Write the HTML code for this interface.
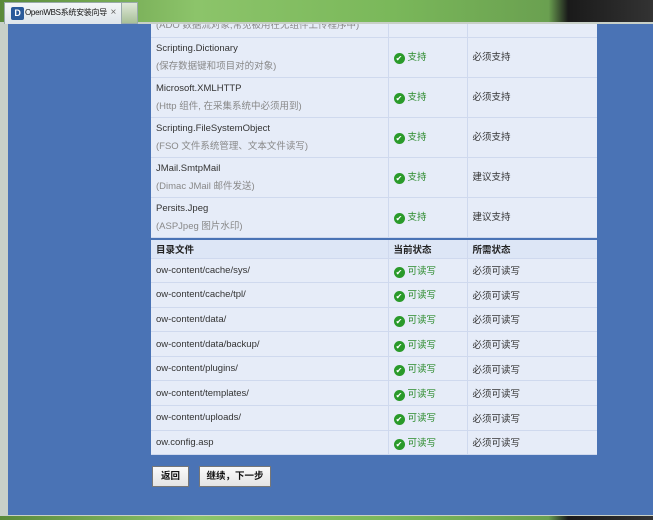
<!DOCTYPE html>
<html><head><meta charset="utf-8"><style>
*{margin:0;padding:0;box-sizing:border-box}
body{width:653px;height:520px;overflow:hidden;position:relative;font-family:"Liberation Sans","Noto Sans CJK SC",sans-serif;font-size:9.5px;color:#333;background:linear-gradient(90deg,#5a8a3a,#8cc46a 30%,#7ab85a 60%,#6aa050 84%,#1a1a1a 87%,#333 100%)}
.frame{position:absolute;left:0;top:22px;width:653px;height:494px;background:#c8d0c8}
.blue{position:absolute;left:8px;top:24px;width:645px;height:491px;background:#4a73b5}
.tab{position:absolute;left:4px;top:2px;width:118px;height:22px;background:linear-gradient(#f4f6f8,#dfe5ea);border:1px solid #9aa;border-bottom:none;font-size:8px;letter-spacing:-0.3px;color:#111;line-height:20px;padding-left:20px;white-space:nowrap;overflow:hidden}
.tab .ic{position:absolute;left:6px;top:4px;width:13px;height:13px;background:#2a5a9a;border-radius:2px;color:#fff;font-size:9px;line-height:13px;text-align:center;font-weight:bold}
.tab .x{position:absolute;right:5px;top:0;color:#666;font-size:10px}
.tab2{position:absolute;left:122px;top:2px;width:16px;height:22px;background:linear-gradient(#dfe8d8,#a8c098);border:1px solid #9aa;border-left:none}
table{position:absolute;left:151px;border-collapse:collapse;background:#e6ecf8;width:446px}
td{border-bottom:1px solid #cfd9ee;border-right:1px solid #cfd9ee;padding-left:5px;vertical-align:middle}
td:last-child{border-right:none}
.c1{width:237px}.c2{width:79px}
.t1 td{height:40px;line-height:18px}
.t1 .g{color:#888}
.ok{color:#2a8a2a}
.ok:before{content:"✔";display:inline-block;width:11px;height:11px;border-radius:50%;background:#2a9a2a;color:#fff;font-size:8px;line-height:11px;text-align:center;margin-right:3px;vertical-align:-1px}
.t2 td{height:24.6px}
.t2 th{height:18px;text-align:left;padding-left:5px;font-weight:bold;color:#222;background:#dde6f6;border-right:1px solid #cfd9ee;border-bottom:1px solid #cfd9ee}
.btn{position:absolute;top:466px;height:21px;background:linear-gradient(#fafafa,#e4e4e4);border:1px solid #777;font-weight:bold;font-size:9.5px;text-align:center;line-height:19px;color:#111}
.cut{height:13px;overflow:hidden}
.cut span{display:block;margin-top:-7px;line-height:18px}
</style></head><body>
<div class="frame"></div>
<div class="tab"><span class="ic">D</span>OpenWBS系统安装向导<span class="x">×</span></div>
<div class="tab2"></div>
<div class="blue"></div>
<table class="t1" style="top:24px">
<tr><td class="c1" style="height:13px;line-height:10px"><div class="cut"><span class="g">(ADO 数据流对象,常见被用在无组件上传程序中)</span></div></td><td class="c2" style="height:13px"></td><td style="height:13px"></td></tr>
<tr><td class="c1">Scripting.Dictionary<br><span class="g">(保存数据键和项目对的对象)</span></td><td class="c2"><span class="ok">支持</span></td><td>必须支持</td></tr>
<tr><td class="c1">Microsoft.XMLHTTP<br><span class="g">(Http 组件, 在采集系统中必须用到)</span></td><td class="c2"><span class="ok">支持</span></td><td>必须支持</td></tr>
<tr><td class="c1">Scripting.FileSystemObject<br><span class="g">(FSO 文件系统管理、文本文件读写)</span></td><td class="c2"><span class="ok">支持</span></td><td>必须支持</td></tr>
<tr><td class="c1">JMail.SmtpMail<br><span class="g">(Dimac JMail 邮件发送)</span></td><td class="c2"><span class="ok">支持</span></td><td>建议支持</td></tr>
<tr><td class="c1" style="height:39px">Persits.Jpeg<br><span class="g">(ASPJpeg 图片水印)</span></td><td class="c2"><span class="ok">支持</span></td><td>建议支持</td></tr>
</table>
<table class="t2" style="top:240px">
<tr><th class="c1">目录文件</th><th class="c2">当前状态</th><th style="border-right:none">所需状态</th></tr>
<tr><td>ow-content/cache/sys/</td><td><span class="ok">可读写</span></td><td>必须可读写</td></tr>
<tr><td>ow-content/cache/tpl/</td><td><span class="ok">可读写</span></td><td>必须可读写</td></tr>
<tr><td>ow-content/data/</td><td><span class="ok">可读写</span></td><td>必须可读写</td></tr>
<tr><td>ow-content/data/backup/</td><td><span class="ok">可读写</span></td><td>必须可读写</td></tr>
<tr><td>ow-content/plugins/</td><td><span class="ok">可读写</span></td><td>必须可读写</td></tr>
<tr><td>ow-content/templates/</td><td><span class="ok">可读写</span></td><td>必须可读写</td></tr>
<tr><td>ow-content/uploads/</td><td><span class="ok">可读写</span></td><td>必须可读写</td></tr>
<tr><td>ow.config.asp</td><td><span class="ok">可读写</span></td><td>必须可读写</td></tr>
</table>
<div class="btn" style="left:152px;width:37px">返回</div>
<div class="btn" style="left:199px;width:72px">继续，下一步</div>
</body></html>
